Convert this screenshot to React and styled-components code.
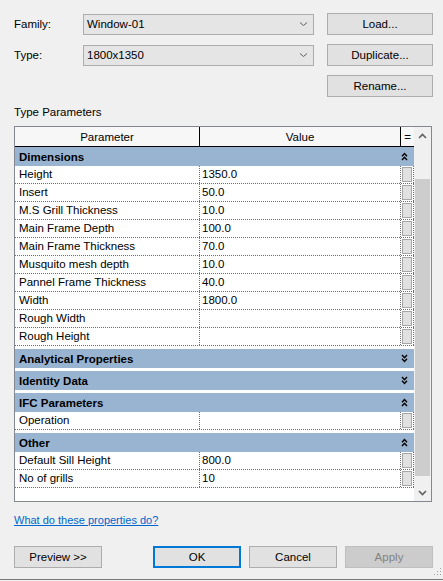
import React from "react";
import styled, { createGlobalStyle } from "styled-components";

const groups = [
  {
    name: "Dimensions",
    open: true,
    rows: [
      ["Height", "1350.0"],
      ["Insert", "50.0"],
      ["M.S Grill Thickness", "10.0"],
      ["Main Frame Depth", "100.0"],
      ["Main Frame Thickness", "70.0"],
      ["Musquito mesh depth", "10.0"],
      ["Pannel Frame Thickness", "40.0"],
      ["Width", "1800.0"],
      ["Rough Width", ""],
      ["Rough Height", ""],
    ],
  },
  { name: "Analytical Properties", open: false, rows: [] },
  { name: "Identity Data", open: false, rows: [] },
  { name: "IFC Parameters", open: true, rows: [["Operation", ""]] },
  {
    name: "Other",
    open: true,
    rows: [
      ["Default Sill Height", "800.0"],
      ["No of grills", "10"],
    ],
  },
];

const Chevron = () => (
  <svg width="9" height="6" viewBox="0 0 9 6">
    <polyline points="1,1.5 4.5,4.5 8,1.5" fill="none" stroke="#5f5f5f" strokeWidth="1" />
  </svg>
);

const DoubleChevron = ({ up }) => (
  <svg width="7" height="9" viewBox="0 0 7 9" style={{ transform: up ? "none" : "scaleY(-1)" }}>
    <polyline points="1,4.2 3.5,1.5 6,4.2" fill="none" stroke="#000" strokeWidth="1.4" />
    <polyline points="1,8 3.5,5.3 6,8" fill="none" stroke="#000" strokeWidth="1.4" />
  </svg>
);

const ScrollArrow = ({ down }) => (
  <svg width="9" height="6" viewBox="0 0 9 6" style={{ transform: down ? "scaleY(-1)" : "none" }}>
    <polyline points="1,5 4.5,1.5 8,5" fill="none" stroke="#606060" strokeWidth="1.6" />
  </svg>
);

const Grip = () => (
  <svg width="10" height="10" viewBox="0 0 10 10">
    {[
      [8, 2],
      [5, 5],
      [8, 5],
      [2, 8],
      [5, 8],
      [8, 8],
    ].map(([x, y]) => (
      <rect key={`${x}-${y}`} x={x} y={y} width="1" height="1" fill="#a0a0a0" />
    ))}
  </svg>
);

const App = () => {
  return (
    <Dialog>
      <GlobalStyle />
      <TopGrid>
        <Label>Family:</Label>
        <Combo>
          <span>Window-01</span>
          <Chevron />
        </Combo>
        <Button>Load...</Button>
        <Label>Type:</Label>
        <Combo>
          <span>1800x1350</span>
          <Chevron />
        </Combo>
        <Button>Duplicate...</Button>
        <Button $col={3}>Rename...</Button>
      </TopGrid>

      <SectionLabel>Type Parameters</SectionLabel>

      <Table>
        <Grid>
          <HeaderRow>
            <HeaderCell $w={185}>Parameter</HeaderCell>
            <HeaderCell $w={201}>Value</HeaderCell>
            <HeaderCell $w={13} $last>=</HeaderCell>
          </HeaderRow>
          {groups.map((g, i) => (
            <React.Fragment key={g.name}>
              <GroupRow $first={i === 0}>
                <span>{g.name}</span>
                <GroupToggle>
                  <DoubleChevron up={g.open} />
                </GroupToggle>
              </GroupRow>
              {g.rows.map(([name, value]) => (
                <DataRow key={name}>
                  <ParamCell>{name}</ParamCell>
                  <ValueCell>{value}</ValueCell>
                  <EqCell>
                    <EqBox />
                  </EqCell>
                </DataRow>
              ))}
            </React.Fragment>
          ))}
        </Grid>
        <Scrollbar>
          <ArrowBox>
            <ScrollArrow />
          </ArrowBox>
          <Track>
            <Thumb />
          </Track>
          <ArrowBox>
            <ScrollArrow down />
          </ArrowBox>
        </Scrollbar>
      </Table>

      <HelpLink href="#">What do these properties do?</HelpLink>

      <ButtonRow>
        <Button $w={88}>Preview &gt;&gt;</Button>
        <RightButtons>
          <Button $w={88} $primary>
            OK
          </Button>
          <Button $w={88}>Cancel</Button>
          <Button $w={88} $disabled>
            Apply
          </Button>
        </RightButtons>
      </ButtonRow>

      <GripCorner>
        <Grip />
      </GripCorner>
    </Dialog>
  );
};

const GlobalStyle = createGlobalStyle`
  body {
    margin: 0;
    background: #f0f0f0;
  }
`;

const Dialog = styled.div`
  position: relative;
  box-sizing: border-box;
  width: 443px;
  height: 580px;
  padding: 13px 10px 0 14px;
  background: #f0f0f0;
  border-bottom: 1px solid #7a7a7a;
  font-family: "Liberation Sans", Arial, sans-serif;
  font-size: 11.5px;
  color: #000;
`;

const TopGrid = styled.div`
  display: grid;
  grid-template-columns: 56px 231px 106px;
  grid-auto-rows: 22px;
  column-gap: 13px;
  row-gap: 9px;
  align-items: center;
`;

const Label = styled.div`
  line-height: 14px;
`;

const Combo = styled.div`
  box-sizing: border-box;
  height: 21px;
  display: flex;
  align-items: center;
  justify-content: space-between;
  padding: 0 5px 0 3px;
  background: #e5e5e5;
  border: 1px solid #adadad;
`;

const Button = styled.div`
  box-sizing: border-box;
  height: 22px;
  width: ${(p) => (p.$w ? `${p.$w}px` : "auto")};
  grid-column: ${(p) => p.$col || "auto"};
  display: flex;
  align-items: center;
  justify-content: center;
  background: ${(p) => (p.$disabled ? "#cccccc" : "#e1e1e1")};
  border: ${(p) => (p.$primary ? "2px solid #0078d7" : p.$disabled ? "1px solid #bfbfbf" : "1px solid #adadad")};
  color: ${(p) => (p.$disabled ? "#838383" : "#000")};
`;

const SectionLabel = styled.div`
  margin: 8px 0 7px;
  line-height: 14px;
`;

const Table = styled.div`
  box-sizing: border-box;
  width: 418px;
  height: 376px;
  display: flex;
  background: #fff;
  border: 1px solid #828790;
`;

const Grid = styled.div`
  width: 399px;
  display: flex;
  flex-direction: column;
  background: #fff;
`;

const HeaderRow = styled.div`
  display: flex;
  height: 20px;
  box-sizing: border-box;
  border-bottom: 1px solid #000;
  background: #f7f7f7;
`;

const HeaderCell = styled.div`
  box-sizing: border-box;
  width: ${(p) => p.$w}px;
  display: flex;
  align-items: center;
  justify-content: center;
  border-right: ${(p) => (p.$last ? "none" : "1px solid #000")};
`;

const GroupRow = styled.div`
  box-sizing: border-box;
  height: 19px;
  margin-top: ${(p) => (p.$first ? 0 : 3)}px;
  display: flex;
  align-items: center;
  justify-content: space-between;
  padding-left: 4px;
  background: #99b4d1;
  font-weight: bold;
`;

const GroupToggle = styled.div`
  width: 13px;
  display: flex;
  align-items: center;
  justify-content: flex-start;
  padding-left: 1px;
`;

const DataRow = styled.div`
  box-sizing: border-box;
  height: 18px;
  display: flex;
  border-bottom: 1px dotted #6d6d6d;
`;

const ParamCell = styled.div`
  box-sizing: border-box;
  width: 185px;
  padding-left: 4px;
  line-height: 17px;
  border-right: 1px dotted #6d6d6d;
  white-space: nowrap;
`;

const ValueCell = styled.div`
  box-sizing: border-box;
  width: 201px;
  padding-left: 2px;
  line-height: 17px;
  border-right: 1px dotted #6d6d6d;
`;

const EqCell = styled.div`
  box-sizing: border-box;
  width: 13px;
  display: flex;
  align-items: center;
  justify-content: center;
  border-right: 1px dotted #6d6d6d;
`;

const EqBox = styled.div`
  box-sizing: border-box;
  width: 10px;
  height: 15px;
  background: #e1e1e1;
  border: 1px solid #a6a6a6;
`;

const Scrollbar = styled.div`
  width: 17px;
  display: flex;
  flex-direction: column;
  background: #f0f0f0;
`;

const ArrowBox = styled.div`
  height: 17px;
  display: flex;
  align-items: center;
  justify-content: center;
`;

const Track = styled.div`
  flex: 1;
  padding: 35px 1px 0;
`;

const Thumb = styled.div`
  height: 297px;
  background: #cdcdcd;
`;

const HelpLink = styled.a`
  display: inline-block;
  margin-top: 11px;
  line-height: 14px;
  font-size: 11px;
  color: #0066cc;
  text-decoration: underline;
`;

const ButtonRow = styled.div`
  display: flex;
  margin-top: 19px;
`;

const RightButtons = styled.div`
  display: flex;
  gap: 8px;
  margin-left: auto;
`;

const GripCorner = styled.div`
  position: absolute;
  right: 1px;
  bottom: 1px;
`;

export default App;
